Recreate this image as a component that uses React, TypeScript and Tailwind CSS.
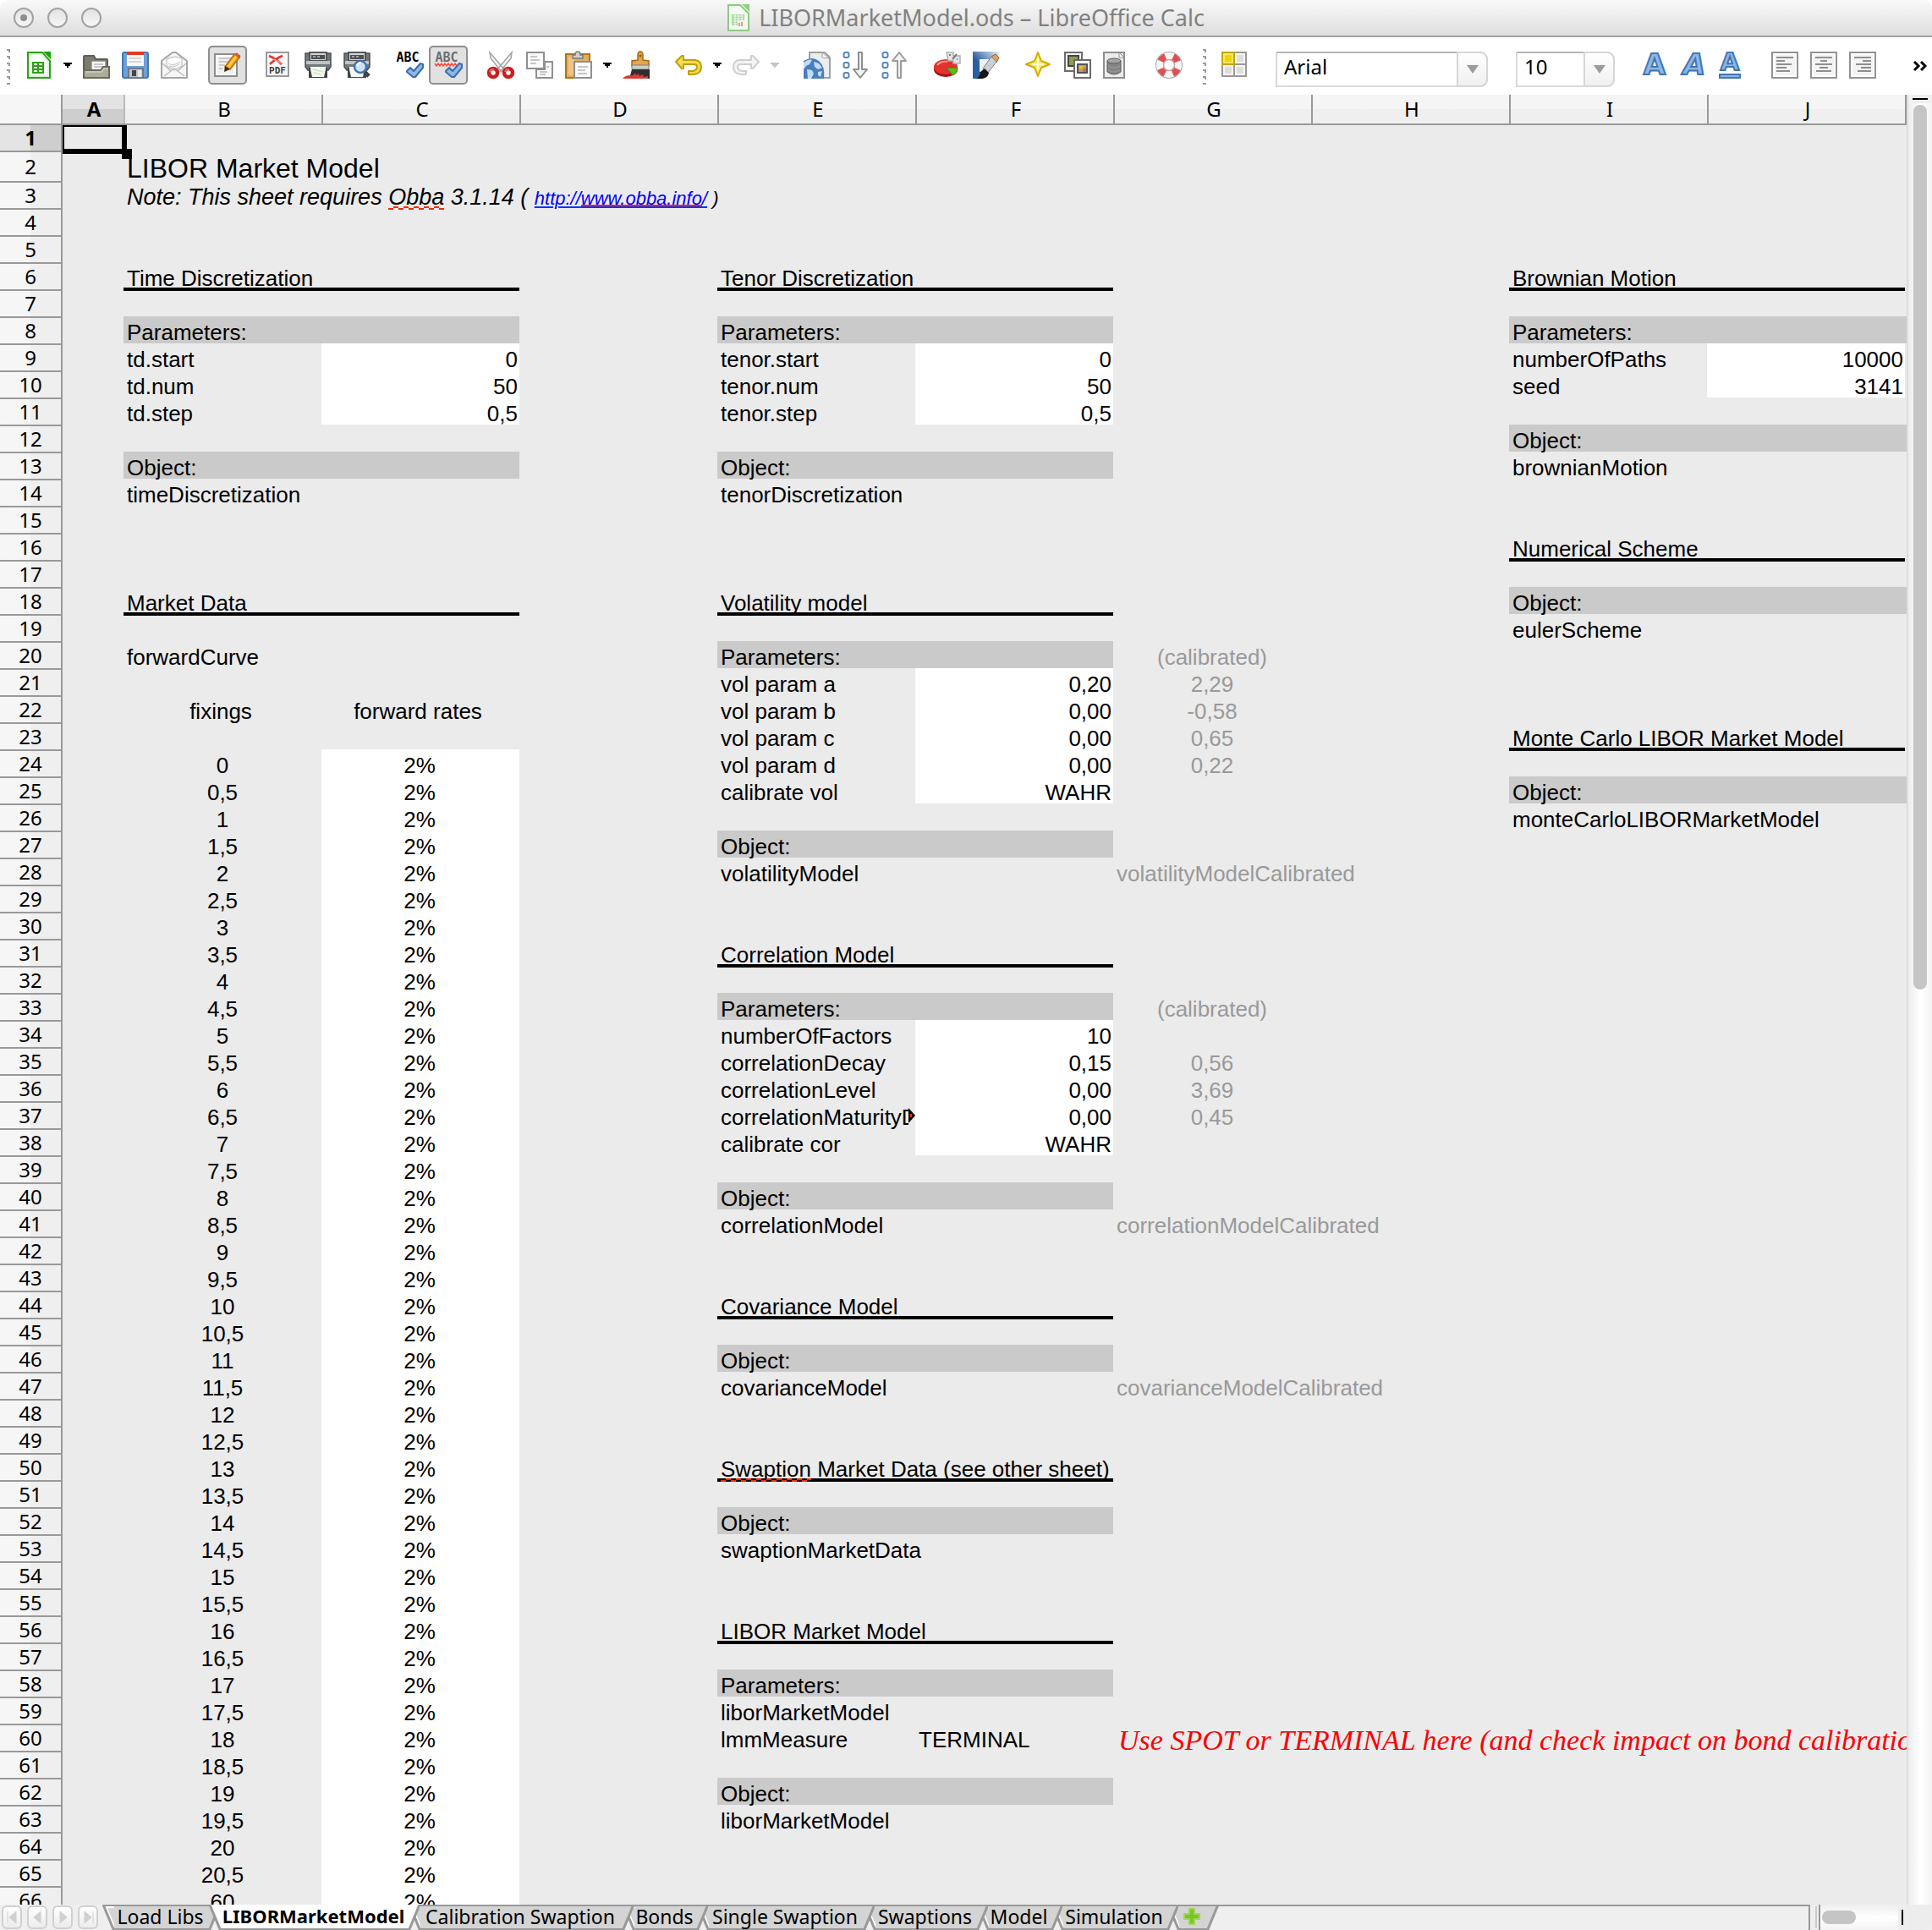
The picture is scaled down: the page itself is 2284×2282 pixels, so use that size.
import React from "react";

const UI_FONT = "font-['Noto_Sans','Open_Sans',sans-serif]";

/* ---------- toolbar icons ---------- */

function Icon({ children, label }: { children: React.ReactNode; label?: string }) {
  return (
    <svg viewBox="0 0 32 32" className="block size-8 shrink-0 overflow-visible" role={label ? "img" : undefined} aria-hidden={!label}>
      {children}
    </svg>
  );
}

const NewIcon = () => (
  <Icon>
    <g transform="translate(2 0)">
      <path d="M1 1h17l9 10v20H1z" fill="#fff" stroke="#2da018" strokeWidth="2" />
      <path d="M3 3h14l8 9v17H3z" fill="none" stroke="#d8f0d2" strokeWidth="2" />
      <path d="M19 0h9v9z" fill="#19a303" />
      <rect x="6" y="12" width="14" height="14" fill="#2da018" />
      <path d="M8 14h4v2H8zM14 14h4v2h-4zM8 18h4v2H8zM14 18h4v2h-4zM8 22h4v2H8zM14 22h4v2h-4z" fill="#e9f9e4" />
    </g>
  </Icon>
);

const OpenIcon = () => (
  <Icon>
    <path d="M1 31V6q0-1 1-1h11l2 4h13q1 0 1 1v21z" fill="#7d7b6c" stroke="#605e51" strokeWidth="2" />
    <path d="M10 11h17v12H10z" fill="#fafafa" stroke="#888" strokeWidth="1.5" />
    <path d="M13 15h11M13 18h11" stroke="#b5b5b5" strokeWidth="1.5" />
    <path d="M3 22h18l3-4h7v13H3q-2 0-2-2V22z" fill="#aeac9c" stroke="#6c6a5c" strokeWidth="2" />
    <path d="M3 24h19l3-4h5" stroke="#cfcdc2" strokeWidth="1.5" fill="none" />
  </Icon>
);

const SaveIcon = () => (
  <Icon>
    <rect x="1" y="1" width="30" height="30" rx="2" fill="#6f9fd6" stroke="#4377b5" strokeWidth="2" />
    <rect x="6" y="0" width="20" height="17" fill="#f8f8f8" />
    <rect x="6" y="0" width="20" height="4" fill="#e13c1e" />
    <path d="M8 8h15M8 12h15" stroke="#ccc" strokeWidth="1.5" />
    <rect x="8" y="20" width="17" height="11" fill="#c2c6cb" stroke="#5f6a76" strokeWidth="1.5" />
    <rect x="12" y="22" width="5" height="7" fill="#454545" />
    <path d="M19 30V22h4v8z" fill="#e8eaec" />
  </Icon>
);

const MailIcon = () => (
  <Icon>
    <path d="M1 31V11L14 1h4l13 10v20z" fill="#f6f6f6" stroke="#a5a5a5" strokeWidth="2" strokeLinejoin="round" />
    <path d="M7 17V9q9-5 18-1v9l-9 5z" fill="#fff" stroke="#ccc" strokeWidth="1.5" />
    <path d="M9 14q6 4 14-2M10 17q6 2 12-2" stroke="#d0d0d0" strokeWidth="1.5" fill="none" />
    <path d="M2 14l10 9L4 29M30 14l-10 9 8 6M12 23l4-3 4 3" stroke="#bdbdbd" strokeWidth="1.5" fill="none" />
  </Icon>
);

const EditIcon = () => (
  <Icon>
    <rect x="1" y="3" width="26" height="26" fill="#fff" stroke="#8d8d8d" strokeWidth="2" />
    <rect x="4" y="6" width="20" height="20" fill="#efefef" />
    <path d="M6 8h14M6 12h12M6 16h7M6 20h4" stroke="#c0c0c0" strokeWidth="1.5" />
    <path d="M13 18L24 3l6 4-11 14z" fill="#f7a11b" stroke="#c46a05" strokeWidth="1.5" />
    <path d="M16 17L26 4l2 1-10 14z" fill="#ffd34f" />
    <path d="M24 3l3-1 4 3-1 3z" fill="#e2574c" stroke="#b5651d" strokeWidth="1" />
    <path d="M13 17l6 4-7 3z" fill="#3a2b14" />
  </Icon>
);

const PdfIcon = () => (
  <Icon>
    <rect x="1" y="1" width="26" height="28" fill="#f8f8f8" stroke="#9a9a9a" strokeWidth="2" />
    <path d="M4 5q9 4 15 10M20 5Q12 8 5 15" stroke="#e8332c" strokeWidth="2.5" fill="none" />
    <path d="M9 9l11 5" stroke="#f39a95" strokeWidth="1.5" />
    <text x="14" y="26" textAnchor="middle" fontSize="11" fontWeight="700" fill="#3b3f44" fontFamily="DejaVu Sans Mono, monospace">PDF</text>
  </Icon>
);

const PrinterBody = () => (
  <>
    <path d="M6 1h20v10H6z" fill="#d5d5d5" stroke="#55585a" strokeWidth="2" />
    <rect x="8" y="4" width="16" height="5" fill="#4d5052" />
    <path d="M10 5h3v2h-3zM15 5h3v2h-3z" fill="#9ea2a4" />
    <path d="M1 2h5v9h20V2h5v16l-3 4H4l-3-4z" fill="#73787a" stroke="#4a4e50" strokeWidth="1.5" />
    <path d="M2 11h28v4H2z" fill="#bfc3c4" />
    <path d="M5 19h22v12H5z" fill="#3f4446" />
    <path d="M7 18h18v3l-2 9H9L7 21z" fill="#f5f8f2" />
  </>
);

const PrintIcon = () => (
  <Icon>
    <PrinterBody />
    <path d="M10 21l12 3M11 25l9 2" stroke="#cfe8c1" strokeWidth="1.5" />
  </Icon>
);

const PreviewIcon = () => (
  <Icon>
    <PrinterBody />
    <path d="M25 24l5 5" stroke="#3f4446" strokeWidth="5" />
    <circle cx="20" cy="18" r="7" fill="#cfe3f7" stroke="#3f74b5" strokeWidth="2.5" />
    <path d="M16 17q1-4 5-4" stroke="#fff" strokeWidth="2" fill="none" />
  </Icon>
);

const CheckMark = () => (
  <path d="M13 23l4-4 4 4 8-9 3 1v4l-9 11h-3l-7-6z" fill="#8fb7e6" stroke="#3a6ead" strokeWidth="2" strokeLinejoin="round" />
);

const SpellIcon = ({ auto }: { auto?: boolean }) => (
  <Icon>
    <text x="14" y="11.5" textAnchor="middle" fontSize="15" fontWeight="700" fill={auto ? "#6d6d6d" : "#000"} fontFamily="DejaVu Sans Mono, monospace">
      ABC
    </text>
    {auto && <path d="M0 14l2 3 2-3 2 3 2-3 2 3 2-3 2 3 2-3 2 3 2-3 2 3 2-3 2 3" stroke="#ff4a3d" strokeWidth="1.5" fill="none" />}
    <CheckMark />
  </Icon>
);

const CutIcon = () => (
  <Icon>
    <path d="M3 1L20 21l-3 3L4 8zM29 1L12 21l3 3L28 8z" fill="#f2f2f2" stroke="#a3a3a3" strokeWidth="1.5" />
    <ellipse cx="7" cy="25" rx="5" ry="5" fill="none" stroke="#c91f1f" strokeWidth="4.5" />
    <ellipse cx="25" cy="25" rx="5" ry="5" fill="none" stroke="#c91f1f" strokeWidth="4.5" />
    <path d="M3 24q1-4 5-3M21 24q1-4 5-3" stroke="#f07070" strokeWidth="1.5" fill="none" />
  </Icon>
);

const CopyIcon = () => (
  <Icon>
    <rect x="1" y="1" width="20" height="19" fill="#fafafa" stroke="#8f8f8f" strokeWidth="2" />
    <path d="M5 6h8M5 10h11M5 14h7" stroke="#b5b5b5" strokeWidth="1.5" />
    <path d="M22 12h9v19H12V21h10z" fill="#fafafa" stroke="#8f8f8f" strokeWidth="2" />
    <path d="M16 24h9M16 27h7M24 18h3" stroke="#b5b5b5" strokeWidth="1.5" />
  </Icon>
);

const PasteIcon = () => (
  <Icon>
    <rect x="1" y="3" width="28" height="28" fill="#e2ad62" stroke="#b27410" strokeWidth="2" />
    <path d="M4 6h7v22H4z" fill="#edc48a" />
    <path d="M9 8V4h3q0-4 3-4t3 4h3v4z" fill="#cfcfcf" stroke="#7a7a7a" strokeWidth="1.5" />
    <rect x="11" y="12" width="20" height="19" fill="#fafafa" stroke="#8f8f8f" strokeWidth="2" />
    <path d="M15 18h12M15 22h9M15 26h11" stroke="#b5b5b5" strokeWidth="1.5" />
  </Icon>
);

const BrushIcon = () => (
  <Icon>
    <path d="M18 10V4q0-4 3-4t3 4v6l7 1v6H11v-6z" fill="#e0a651" stroke="#a8690f" strokeWidth="1.5" />
    <circle cx="21" cy="5" r="1.5" fill="#8a5610" />
    <path d="M11 16h20v5H11z" fill="#c9cdcd" stroke="#7c8080" strokeWidth="1" />
    <path d="M11 21h21v11H8z" fill="#2f2f2f" />
    <path d="M0 32q3-4 9-4 4 1 6-3l1 3 3-2 1 3 4-2 1 3 5-1v3z" fill="#dd3a34" />
  </Icon>
);

const UndoIcon = ({ off }: { off?: boolean }) => (
  <Icon>
    <g transform={off ? "matrix(-1 0 0 1 32 0)" : undefined}>
      <path
        d="M10 5v5h14q7 1 7 8 0 8-9 9h-6v-4h5q5-1 5-5 0-3-4-3H10v5H8L1 12l7-7z"
        fill={off ? "#f4f4f4" : "#f2dc55"}
        stroke={off ? "#cfcfcf" : "#c3a000"}
        strokeWidth="2"
        strokeLinejoin="round"
      />
    </g>
  </Icon>
);

const GlobePageIcon = () => (
  <Icon>
    <path d="M7 1h18l6 6v24H7z" fill="#ededed" stroke="#a0a0a0" strokeWidth="2" />
    <path d="M22 1v6l8 1z" fill="#fff" stroke="#a0a0a0" strokeWidth="1" />
    <path d="M0 11q10-6 18 0 8 7 6 21H0z" fill="#4a7fbd" />
    <path d="M0 13q6-5 10-3l-3 5-4 2-3 4zM12 12l6 2 4 5-5 2-4-3zM4 21l6 1 2 4-3 6H5zM17 24l5-1-2 7-3-2z" fill="#c3dbf3" />
  </Icon>
);

const SortIcon = ({ up }: { up?: boolean }) => (
  <Icon>
    {[4, 16, 28].map((y) => (
      <rect key={y} x="1.5" y={y - 3} width="6" height="6" rx="2" fill="#fff" stroke="#5586c0" strokeWidth="2" />
    ))}
    {up ? (
      <path d="M19 31V11h-6L21 1l8 10h-6v20z" fill="#f3f3f3" stroke="#9a9a9a" strokeWidth="2" strokeLinejoin="round" />
    ) : (
      <path d="M19 1v20h-6l8 10 8-10h-6V1z" fill="#f3f3f3" stroke="#8d8d8d" strokeWidth="2" strokeLinejoin="round" />
    )}
  </Icon>
);

const ChartIcon = () => (
  <Icon>
    <ellipse cx="14" cy="21" rx="14" ry="9" fill="#a81414" />
    <ellipse cx="14" cy="18" rx="14" ry="9" fill="#e2322b" />
    <path d="M4 16q4-5 12-4" stroke="#f79a94" strokeWidth="2" fill="none" />
    <path d="M15 19h13q0 7-6 9z" fill="#69b31c" stroke="#3f7f0d" strokeWidth="1" />
    <path d="M15 1h8v4h8v9h-8v-3h-6z" fill="#e4e4e4" stroke="#b0b0b0" strokeWidth="1.5" />
    <path d="M18 4h2M22 9l5-6M27 9h1" stroke="#777" strokeWidth="2" />
  </Icon>
);

const DrawIcon = () => (
  <Icon>
    <defs>
      <linearGradient id="drawSky" x1="0" y1="1" x2="1" y2="0">
        <stop offset="0.4" stopColor="#2c5f9e" />
        <stop offset="1" stopColor="#e8f0fa" />
      </linearGradient>
    </defs>
    <path d="M0 0h32L12 32H0z" fill="url(#drawSky)" />
    <path d="M8 9h12v15H8z" fill="#fff" opacity=".9" />
    <path d="M22 6l5-3 4 4-3 6z" fill="#d9a066" stroke="#99602a" strokeWidth="1" />
    <path d="M12 20L22 6l6 6-10 13z" fill="#cdd0d2" stroke="#7b7f82" strokeWidth="1" />
    <path d="M4 32q5-3 5-8l5-4 5 5q-1 6-8 7z" fill="#161616" />
  </Icon>
);

const StarIcon = () => (
  <Icon>
    <path d="M15 1l4 10 10 4-10 4-4 10-4-10-10-4 10-4z" fill="#fbe96a" stroke="#d3ab00" strokeWidth="2" strokeLinejoin="round" />
    <path d="M15 8v14M8 15h14" stroke="#fffbd0" strokeWidth="2" />
  </Icon>
);

const GalleryIcon = () => (
  <Icon>
    <rect x="1" y="1" width="20" height="22" fill="#f4f4f4" stroke="#6c6c6c" strokeWidth="2" />
    <rect x="5" y="5" width="12" height="12" fill="#8fa04b" stroke="#444" strokeWidth="2" />
    <rect x="12" y="10" width="19" height="21" fill="#fafafa" stroke="#6c6c6c" strokeWidth="2" />
    <rect x="16" y="15" width="11" height="10" fill="#c79a6c" stroke="#555" strokeWidth="2" />
    <path d="M18 17h4v3h-4z" fill="#e0c832" />
    <path d="M22 20h4v4h-4z" fill="#d36a5c" />
  </Icon>
);

const DataSourceIcon = () => (
  <Icon>
    <rect x="1" y="1" width="24" height="30" fill="#ececec" stroke="#8f8f8f" strokeWidth="2" />
    <path d="M19 1l6 6h-6z" fill="#fff" stroke="#8f8f8f" strokeWidth="1" />
    <path d="M5 11v13q8 6 16 0V11z" fill="#858585" stroke="#5c5c5c" strokeWidth="1" />
    <ellipse cx="13" cy="11" rx="8" ry="3" fill="#a5a5a5" stroke="#5c5c5c" strokeWidth="1" />
    <path d="M6 17q7 4 14 0M6 22q7 4 14 0" stroke="#9c9c9c" strokeWidth="1" fill="none" />
  </Icon>
);

const HelpIcon = () => (
  <Icon>
    <circle cx="16" cy="16" r="10.5" fill="none" stroke="#a9a9a9" strokeWidth="11" />
    <circle cx="16" cy="16" r="10.5" fill="none" stroke="#f6f6f6" strokeWidth="9" />
    <circle cx="16" cy="16" r="10.5" fill="none" stroke="#e05050" strokeWidth="9" strokeDasharray="7.5 9" strokeDashoffset="-4.5" />
    <circle cx="16" cy="16" r="6.5" fill="#fff" stroke="#c9a0a0" strokeWidth="1.5" />
  </Icon>
);

const StylesIcon = () => (
  <Icon>
    <rect x="0" y="0" width="30" height="30" fill="#999" />
    <path d="M2 16h12v12H2zM16 16h12v12H16zM16 2h12v12H16z" fill="#f7f7f7" />
    <path d="M4 18h8v8H4zM18 18h8v8h-8zM18 4h8v8h-8z" fill="#dedede" />
    <rect x="1" y="1" width="14" height="14" fill="#f9e766" stroke="#c7a400" strokeWidth="2" />
    <rect x="4" y="4" width="8" height="8" fill="#efd500" />
  </Icon>
);

const LetterIcon = ({ kind }: { kind: "bold" | "italic" | "underline" }) => (
  <Icon>
    <text
      x={kind === "bold" ? 16 : kind === "italic" ? 17 : 13}
      y={kind === "underline" ? 22 : 27}
      textAnchor="middle"
      fontSize={kind === "underline" ? 29 : 34}
      fontWeight="700"
      fontStyle={kind === "italic" ? "italic" : "normal"}
      fill="#8fb6e4"
      stroke="#4076b5"
      strokeWidth="2"
      fontFamily="DejaVu Sans, sans-serif"
    >
      A
    </text>
    {kind === "underline" && <rect x="1" y="27" width="24" height="4" fill="#8fb6e4" stroke="#4076b5" strokeWidth="2" />}
  </Icon>
);

const AlignIcon = ({ lines }: { lines: string }) => (
  <Icon>
    <rect x="1" y="1" width="30" height="30" fill="#fff" stroke="#939393" strokeWidth="2" />
    <rect x="4" y="4" width="24" height="24" fill="#f3f3f3" />
    <path d={lines} stroke="#8f8f8f" strokeWidth="2" />
  </Icon>
);

/* ---------- toolbar ---------- */

function Tool({ label, on, children }: { label: string; on?: boolean; children: React.ReactNode }) {
  return (
    <button
      type="button"
      aria-label={label}
      aria-pressed={on}
      className={
        on
          ? "flex size-[46px] shrink-0 items-center justify-center rounded-[5px] border-2 border-[#8e8e8e] bg-[#e1e1e1]"
          : "flex size-[46px] shrink-0 items-center justify-center"
      }
    >
      {children}
    </button>
  );
}

function Arrow({ label, off }: { label: string; off?: boolean }) {
  return (
    <button type="button" aria-label={label} className="flex h-[46px] w-[22px] shrink-0 items-center justify-center">
      <svg viewBox="0 0 10 6" className="h-[6px] w-[10px]" aria-hidden="true">
        <path d="M0 0h10v2H8v2H6v2H4V4H2V2H0z" fill={off ? "#c4c4c4" : "#000"} />
      </svg>
    </button>
  );
}

function Grip() {
  return (
    <svg viewBox="0 0 4 46" className="h-[46px] w-1 shrink-0" aria-hidden="true">
      {[6, 14, 22, 30, 38, 46].map((y) => (
        <path key={y} d={`M0 ${y - 2}h4v4H2v-2H0z`} fill="#9c9c9c" />
      ))}
    </svg>
  );
}

function Combo({ id, label, options, className }: { id: string; label: string; options: string[]; className: string }) {
  return (
    <div className={`relative mt-[7px] h-[42px] shrink-0 ${className}`}>
      <label htmlFor={id} className="sr-only">
        {label}
      </label>
      <select
        id={id}
        defaultValue={options[0]}
        className={`block h-full w-full appearance-none rounded-r-[9px] border-2 border-[#d9d9d9] border-t-[#b5b5b5] bg-white pb-[6px] pl-2 text-[24px] leading-8 text-black ${UI_FONT}`}
      >
        {options.map((o) => (
          <option key={o}>{o}</option>
        ))}
      </select>
      <span className="pointer-events-none absolute inset-y-0 right-0 flex w-[37px] items-center justify-center rounded-r-[9px] border-2 border-[#d6d6d6] bg-gradient-to-b from-white to-[#f0f0f0]">
        <svg viewBox="0 0 14 10" className="h-[10px] w-[14px]" aria-hidden="true">
          <path d="M0 0h14L7 10z" fill="#9c9c9c" />
        </svg>
      </span>
    </div>
  );
}

function Toolbar() {
  return (
    <div role="toolbar" aria-label="Standard" className="flex h-[68px] shrink-0 items-start overflow-hidden bg-white pt-[10px] pl-2">
      <Grip />
      <div className="ml-[11px] flex">
        <Tool label="New"><NewIcon /></Tool>
        <Arrow label="New document types" />
        <Tool label="Open"><OpenIcon /></Tool>
        <Tool label="Save"><SaveIcon /></Tool>
        <Tool label="E-mail"><MailIcon /></Tool>
      </div>
      <div className="ml-[17px] flex">
        <Tool label="Edit File" on><EditIcon /></Tool>
      </div>
      <div className="ml-[15px] flex">
        <Tool label="Export as PDF"><PdfIcon /></Tool>
        <Tool label="Print"><PrintIcon /></Tool>
        <Tool label="Page Preview"><PreviewIcon /></Tool>
      </div>
      <div className="ml-4 flex">
        <Tool label="Spelling"><SpellIcon /></Tool>
        <Tool label="AutoSpellcheck" on><SpellIcon auto /></Tool>
      </div>
      <div className="ml-4 flex">
        <Tool label="Cut"><CutIcon /></Tool>
        <Tool label="Copy"><CopyIcon /></Tool>
        <Tool label="Paste"><PasteIcon /></Tool>
        <Arrow label="Paste options" />
        <Tool label="Format Paintbrush"><BrushIcon /></Tool>
      </div>
      <div className="ml-4 flex">
        <Tool label="Undo"><UndoIcon /></Tool>
        <Arrow label="Undo list" />
        <Tool label="Redo"><UndoIcon off /></Tool>
        <Arrow label="Redo list" off />
      </div>
      <div className="ml-4 flex">
        <Tool label="Hyperlink"><GlobePageIcon /></Tool>
        <Tool label="Sort Ascending"><SortIcon /></Tool>
        <Tool label="Sort Descending"><SortIcon up /></Tool>
      </div>
      <div className="ml-4 flex">
        <Tool label="Chart"><ChartIcon /></Tool>
        <Tool label="Show Draw Functions"><DrawIcon /></Tool>
      </div>
      <div className="ml-4 flex">
        <Tool label="Navigator"><StarIcon /></Tool>
        <Tool label="Gallery"><GalleryIcon /></Tool>
        <Tool label="Data Sources"><DataSourceIcon /></Tool>
      </div>
      <div className="ml-4 flex">
        <Tool label="Help"><HelpIcon /></Tool>
      </div>
      <div className="ml-[17px] flex">
        <Grip />
        <div className="ml-[11px] flex">
          <Tool label="Styles and Formatting"><StylesIcon /></Tool>
        </div>
      </div>
      <Combo id="font-name" label="Font Name" options={["Arial", "Courier New", "Times New Roman"]} className="ml-[25px] w-[251px]" />
      <Combo id="font-size" label="Font Size" options={["10", "12", "14"]} className="ml-[33px] w-[117px]" />
      <div className="ml-6 flex">
        <Tool label="Bold"><LetterIcon kind="bold" /></Tool>
        <Tool label="Italic"><LetterIcon kind="italic" /></Tool>
        <Tool label="Underline"><LetterIcon kind="underline" /></Tool>
      </div>
      <div className="ml-4 flex">
        <Tool label="Align Left"><AlignIcon lines="M6 7h20M6 11h10M6 15h18M6 19h12M6 23h16" /></Tool>
        <Tool label="Align Center"><AlignIcon lines="M6 7h20M12 11h8M6 15h20M11 19h10M7 23h18" /></Tool>
        <Tool label="Align Right"><AlignIcon lines="M6 7h20M16 11h10M8 15h18M14 19h12M10 23h16" /></Tool>
      </div>
      <button type="button" aria-label="More controls" className="mt-[18px] mr-[6px] ml-auto">
        <svg viewBox="0 0 16 12" className="h-3 w-4" aria-hidden="true">
          <path d="M1 1l5 5-5 5M9 1l5 5-5 5" stroke="#000" strokeWidth="3" fill="none" />
        </svg>
      </button>
    </div>
  );
}

function TitleBar() {
  return (
    <header className="flex h-11 shrink-0 items-center rounded-t-[9px] border-b-2 border-[#a0a0a0] bg-gradient-to-b from-[#f9f9f9] to-[#dedede] px-4">
      <div className="flex w-48 gap-4">
        {["Close", "Minimize", "Zoom"].map((name) => (
          <button
            key={name}
            type="button"
            aria-label={name}
            className="flex size-6 items-center justify-center rounded-full border-2 border-[#a2a2a2] bg-gradient-to-b from-[#e2e2e2] to-[#f7f7f7]"
          >
            {name === "Close" && <span className="size-2 rounded-full bg-[#8d8d8d]" />}
          </button>
        ))}
      </div>
      <div className="flex flex-1 items-center justify-center gap-[11px]">
        <svg viewBox="0 0 26 32" className="h-8 w-[26px]" aria-hidden="true">
          <path d="M1 1h14l10 10v20H1z" fill="#f4faf2" stroke="#8fc985" strokeWidth="2" />
          <path d="M17 0h9v9z" fill="#8ccf80" />
          <rect x="5" y="12" width="15" height="13" fill="#a5d49c" />
          <path d="M6 14h13M6 17h13M6 20h13M6 23h13M9 12v13M13 12v13M17 12v13" stroke="#f0faee" strokeWidth="1" />
          <path d="M12 19h8v7h-8z" fill="#f4f4f4" />
          <path d="M13 22h2v4h-2zM16 21h2v5h-2z" fill="#e79a7c" />
        </svg>
        <h1 className={`text-[27px] leading-8 whitespace-nowrap text-[#808080] ${UI_FONT}`}>LIBORMarketModel.ods – LibreOffice Calc</h1>
      </div>
      <div className="w-48" />
    </header>
  );
}

/* ---------- sheet contents ---------- */

type Kind = "text" | "title" | "note" | "band" | "input" | "rate" | "center" | "muted" | "mutedCenter" | "heading" | "script" | "clip";
type Cell = { kind: Kind; value?: React.ReactNode };

const KIND: Record<Kind, string> = {
  text: "pl-1",
  title: "pl-1 text-[32px] leading-[30px]",
  note: "pl-1 text-[27px] italic",
  band: "bg-[#cacaca] pl-1",
  input: "bg-white pr-[2px] text-right",
  rate: "bg-white pr-[2px] text-center",
  center: "text-center",
  muted: "pl-1 text-[#999]",
  mutedCenter: "text-center text-[#999]",
  heading: "border-b-2 border-black pl-1 leading-[22px]",
  script: "pl-[6px] font-['Liberation_Serif',serif] text-[34px] leading-6 italic text-[#fb0007]",
  clip: "relative pl-1",
};

const COLUMNS = ["A", "B", "C", "D", "E", "F", "G", "H", "I", "J"];
const cells: Record<string, Cell> = {};
const ruleBelow = new Set<string>();

const put = (ref: string, kind: Kind, value?: React.ReactNode) => {
  cells[ref] = { kind, value };
};
const next = (col: string) => COLUMNS[COLUMNS.indexOf(col) + 1];
const heading = (col: string, row: number, value: React.ReactNode) => {
  put(col + row, "heading", value);
  put(next(col) + row, "heading");
  ruleBelow.add(col + (row + 1));
  ruleBelow.add(next(col) + (row + 1));
};
const band = (col: string, row: number, value: string) => {
  put(col + row, "band", value);
  put(next(col) + row, "band");
};
const params = (col: string, row: number, list: [string, string][]) => {
  band(col, row, "Parameters:");
  list.forEach(([name, value], i) => {
    put(col + (row + 1 + i), "text", name);
    put(next(col) + (row + 1 + i), "input", value);
  });
};
const object = (col: string, row: number, name: string) => {
  band(col, row, "Object:");
  put(col + (row + 1), "text", name);
};

function Squiggle({ children, className }: { children: React.ReactNode; className: string }) {
  return (
    <span className="relative">
      {children}
      <svg className={`absolute left-0 h-1 w-full ${className}`} aria-hidden="true">
        <defs>
          <pattern id="squiggle" width="12" height="4" patternUnits="userSpaceOnUse">
            <path d="M0 2h6v2H0zM6 0h6v2H6z" fill="#ff2600" />
          </pattern>
        </defs>
        <rect width="100%" height="4" fill="url(#squiggle)" />
      </svg>
    </span>
  );
}

put("B2", "title", "LIBOR Market Model");
put(
  "B3",
  "note",
  <>
    Note: This sheet requires <Squiggle className="bottom-0">Obba</Squiggle> 3.1.14 ({" "}
    <span className="text-[22px] leading-none">
      <a href="http://www.obba.info/" className="underline decoration-[#0433ff] decoration-2 underline-offset-2 text-[#0000ff]">
        http://
        <span className="underline decoration-[#ff2600] decoration-2 underline-offset-0">www.obba.info</span>/
      </a>{" "}
      )
    </span>
  </>,
);

heading("B", 6, "Time Discretization");
params("B", 8, [["td.start", "0"], ["td.num", "50"], ["td.step", "0,5"]]);
object("B", 13, "timeDiscretization");
heading("B", 18, "Market Data");
put("B20", "text", "forwardCurve");
put("B22", "center", <span className="pr-1">fixings</span>);
put("C22", "center", <span className="pr-[6px]">forward rates</span>);
for (let i = 0; i <= 42; i++) {
  put(`B${24 + i}`, "center", i === 42 ? "60" : String(i / 2).replace(".", ","));
  put(`C${24 + i}`, "rate", "2%");
}

heading("E", 6, "Tenor Discretization");
params("E", 8, [["tenor.start", "0"], ["tenor.num", "50"], ["tenor.step", "0,5"]]);
object("E", 13, "tenorDiscretization");

heading("E", 18, "Volatility model");
params("E", 20, [["vol param a", "0,20"], ["vol param b", "0,00"], ["vol param c", "0,00"], ["vol param d", "0,00"], ["calibrate vol", "WAHR"]]);
["(calibrated)", "2,29", "-0,58", "0,65", "0,22"].forEach((v, i) => put(`G${20 + i}`, "mutedCenter", v));
object("E", 27, "volatilityModel");
put("G28", "muted", "volatilityModelCalibrated");

heading("E", 31, "Correlation Model");
params("E", 33, [["numberOfFactors", "10"], ["correlationDecay", "0,15"], ["correlationLevel", "0,00"], ["", "0,00"], ["calibrate cor", "WAHR"]]);
put(
  "E37",
  "clip",
  <>
    <div className="mr-2 overflow-x-clip">correlationMaturityDecay</div>
    <svg viewBox="0 0 8 18" className="absolute top-2 right-0 h-[18px] w-2" aria-hidden="true">
      <path d="M0 0l8 9-8 9z" fill="#000" />
      <path d="M2 7h2v4H2z" fill="#ff2600" />
    </svg>
  </>,
);
put("G33", "mutedCenter", "(calibrated)");
["0,56", "3,69", "0,45"].forEach((v, i) => put(`G${35 + i}`, "mutedCenter", v));
object("E", 40, "correlationModel");
put("G41", "muted", "correlationModelCalibrated");

heading("E", 44, "Covariance Model");
object("E", 46, "covarianceModel");
put("G47", "muted", "covarianceModelCalibrated");

heading("E", 50, <><Squiggle className="bottom-0 z-10">Swaption</Squiggle> Market Data (see other sheet)</>);
object("E", 52, "swaptionMarketData");

heading("E", 56, "LIBOR Market Model");
band("E", 58, "Parameters:");
put("E59", "text", "liborMarketModel");
put("E60", "text", "lmmMeasure");
put("F60", "text", "TERMINAL");
put("G60", "script", "Use SPOT or TERMINAL here (and check impact on bond calibration)");
object("E", 62, "liborMarketModel");

heading("I", 6, "Brownian Motion");
params("I", 8, [["numberOfPaths", "10000"], ["seed", "3141"]]);
object("I", 12, "brownianMotion");
heading("I", 16, "Numerical Scheme");
object("I", 18, "eulerScheme");
heading("I", 23, "Monte Carlo LIBOR Market Model");
object("I", 25, "monteCarloLIBORMarketModel");

const ROWS = Array.from({ length: 66 }, (_, i) => i + 1);

function Cursor() {
  return (
    <div className="absolute top-0 left-0 z-10 h-[34px] w-[76px] border-t-2 border-r-[6px] border-b-[6px] border-l-2 border-black">
      <div className="absolute top-[26px] left-[68px] size-3 bg-black" />
    </div>
  );
}

/* The narrow strip right of column J: the header's closing line and the start of the next column's fills. */
function EdgeCell({ row }: { row: number }) {
  if (row === 1) return <td className="border-t-2 border-[#999] p-0" />;
  return <td className={cells["J" + row]?.kind === "band" ? "bg-[#cacaca] p-0" : "p-0"} />;
}

function Sheet() {
  return (
    <table className="w-full table-fixed border-separate border-spacing-0 bg-[#ebebeb] font-['Liberation_Sans',Arial,sans-serif] text-[26px] leading-[26px] text-black">
      <colgroup>
        <col className="w-[72px]" />
        <col className="w-[74px]" />
        {COLUMNS.slice(1, -1).map((c) => (
          <col key={c} className="w-[234px]" />
        ))}
        <col />
        <col className="w-[2px]" />
      </colgroup>
      <thead>
        <tr className={`text-[24px] ${UI_FONT}`}>
          <th className="h-[34px] bg-[#f6f6f6] p-0" aria-label="Select all" />
          {COLUMNS.map((c, i) => (
            <th
              key={c}
              scope="col"
              className={
                i === 0
                  ? "border-l-2 border-[#999] bg-linear-to-b from-[#e3e3e3] from-50% to-[#cecece] to-50% py-0 pr-0 pl-[2px] font-bold"
                  : i === 1
                    ? "border-l-2 border-[#bbb] bg-linear-to-b from-[#f5f5f5] from-50% to-[#efefef] to-50% py-0 pr-0 pl-[2px] font-normal"
                    : "border-l-2 border-[#999] bg-linear-to-b from-[#f5f5f5] from-50% to-[#efefef] to-50% py-0 pr-0 pl-[2px] font-normal"
              }
            >
              {c}
            </th>
          ))}
          <td className="bg-[#999] p-0" />
        </tr>
      </thead>
      <tbody>
        {ROWS.map((r) => (
          <tr key={r} className={r === 2 ? "h-9" : "h-8"}>
            <th
              scope="row"
              className={
                r === 1
                  ? `border-t-2 border-[#999] bg-linear-to-r from-[#e4e4e4] from-50% to-[#cecece] to-50% p-0 text-[24px] font-bold ${UI_FONT}`
                  : `border-t-2 border-[#999] bg-linear-to-r from-[#f6f6f6] from-50% to-[#efefef] to-50% p-0 text-[24px] font-normal ${UI_FONT}`
              }
            >
              {r}
            </th>
            {COLUMNS.map((c, i) => {
              const cell = cells[c + r];
              if (i === 0)
                return (
                  <td key={c} className={r === 1 ? "relative border-t-2 border-l-2 border-[#999] p-0" : "border-l-2 border-[#999] p-0"}>
                    {r === 1 && <Cursor />}
                  </td>
                );
              if (r === 1) return <td key={c} className="border-t-2 border-[#999] p-0" />;
              if (ruleBelow.has(c + r)) return <td key={c} className="border-t-2 border-black p-0" />;
              return (
                <td key={c} className={cell ? `py-0 align-bottom whitespace-nowrap ${KIND[cell.kind]}` : "p-0"}>
                  {cell?.value}
                </td>
              );
            })}
            <EdgeCell row={r} />
          </tr>
        ))}
      </tbody>
    </table>
  );
}

function VerticalScrollbar() {
  return (
    <div className="flex w-[30px] shrink-0 flex-col border-l-2 border-[#dedede] bg-linear-to-r from-[#ededed] via-white to-[#f4f4f4]">
      <div className="flex h-[10px] items-center justify-center bg-[#f0f0f0]">
        <div className="h-[2px] w-[18px] bg-black" />
      </div>
      <div className="mt-[2px] ml-[6px] h-[1046px] w-4 rounded-full bg-[#c5c5c5]" />
    </div>
  );
}

/* ---------- sheet tabs ---------- */

const TABS: { name: string; width: string; order: string }[] = [
  { name: "Load Libs", width: "w-[112px]", order: "z-10" },
  { name: "LIBORMarketModel", width: "w-[222px]", order: "z-20" },
  { name: "Calibration Swaption", width: "w-[239px]", order: "z-[9]" },
  { name: "Bonds", width: "w-[74px]", order: "z-[8]" },
  { name: "Single Swaption", width: "w-[183px]", order: "z-[7]" },
  { name: "Swaptions", width: "w-[120px]", order: "z-[6]" },
  { name: "Model", width: "w-[74px]", order: "z-[5]" },
  { name: "Simulation", width: "w-[123px]", order: "z-[4]" },
  { name: "", width: "w-[33px]", order: "z-[3]" },
];

function Tab({ name, width, order }: { name: string; width: string; order: string }) {
  const active = name === "LIBORMarketModel";
  const fill = active ? "#ffffff" : "#d4d4d4";
  return (
    <button
      type="button"
      role="tab"
      aria-selected={active}
      aria-label={name || "Add sheet"}
      className={`relative -ml-[14px] flex h-[30px] shrink-0 first:ml-0 ${order}`}
    >
      <svg viewBox="0 0 14 30" className="h-[30px] w-[14px] shrink-0" aria-hidden="true">
        <path d="M1 0h13v30h-1z" fill={fill} />
        {!active && <path d="M2 3h12" stroke="#fff" strokeWidth="2" />}
        <path d="M4 2l11 26" stroke="#fff" strokeWidth="2" />
        <path d="M1 0l12 29h1" stroke="#999" strokeWidth="3" fill="none" />
        {!active && <path d="M0 1h14" stroke="#999" strokeWidth="2" />}
      </svg>
      <span
        className={
          active
            ? `flex h-[30px] items-center justify-center border-b-2 border-[#999] bg-white pr-[3px] pb-[2px] text-[22px] leading-6 font-bold whitespace-nowrap text-black ${UI_FONT} ${width}`
            : `flex h-[30px] items-center justify-center border-y-2 border-[#999] bg-[#d4d4d4] pr-[3px] pb-[2px] text-[23px] leading-6 whitespace-nowrap text-black ${UI_FONT} ${width}`
        }
      >
        {name || (
          <svg viewBox="0 0 20 20" className="size-5" aria-hidden="true">
            <path d="M7 1h6v6h6v6h-6v6H7v-6H1V7h6z" fill="#7cc520" stroke="#9bd65a" strokeWidth="2" strokeLinejoin="round" />
          </svg>
        )}
      </span>
      <svg viewBox="0 0 14 30" className="h-[30px] w-[14px] shrink-0" aria-hidden="true">
        <path d="M0 0h13L1 30H0z" fill={fill} />
        {!active && <path d="M0 1h14" stroke="#999" strokeWidth="2" />}
        <path d="M13 0L1 29H0" stroke="#999" strokeWidth="3" fill="none" />
      </svg>
    </button>
  );
}

const NAV: [string, string][] = [
  ["First sheet", "M7 7v14M17 7v14l-8-7z"],
  ["Previous sheet", "M16 7v14l-8-7z"],
  ["Next sheet", "M9 7v14l8-7z"],
  ["Last sheet", "M8 7v14l8-7zM18 7v14"],
];

function SheetTabs() {
  return (
    <footer className="flex h-[30px] shrink-0 bg-[#efefef]">
      <div className="flex w-[121px] shrink-0 gap-[6px] pt-px pl-[2px]">
        {NAV.map(([label, d]) => (
          <button key={label} type="button" aria-label={label} disabled className="h-7 w-6 rounded-[6px] border-2 border-[#d0d0d0] bg-linear-to-b from-white to-[#ececec]">
            <svg viewBox="2 2 20 24" className="h-6 w-5" aria-hidden="true">
              <path d={d} fill="#d0d0d0" stroke="#d0d0d0" strokeWidth="1" />
            </svg>
          </button>
        ))}
      </div>
      <div role="tablist" aria-label="Sheets" className="flex min-w-0">
        {TABS.map((t) => (
          <Tab key={t.name} {...t} />
        ))}
      </div>
      <div className="min-w-0 flex-1 border-t-2 border-r-2 border-[#999]" />
      <div className="flex w-3 shrink-0 border-r-2 border-[#999] p-[2px]">
        <div className="flex-1 border-r-2 border-[#ccc] bg-[#eee]" />
      </div>
      <div className="flex w-[92px] shrink-0 items-center bg-linear-to-b from-[#eee] via-white to-[#f4f4f4] pl-[2px]">
        <div className="h-4 w-10 rounded-full bg-[#c5c5c5]" />
      </div>
      <div className="flex w-[10px] shrink-0 items-center justify-center bg-[#eee]">
        <div className="h-[18px] w-[2px] bg-black" />
      </div>
      <div className="w-[30px] shrink-0 rounded-br-[9px] bg-[#ededed]" />
    </footer>
  );
}

export default function App() {
  return (
    <div className="flex h-screen flex-col overflow-hidden bg-white">
      <TitleBar />
      <Toolbar />
      <main className="flex min-h-0 flex-1">
        <div className="min-w-0 flex-1 overflow-hidden bg-[#ebebeb]">
          <Sheet />
        </div>
        <VerticalScrollbar />
      </main>
      <SheetTabs />
    </div>
  );
}
